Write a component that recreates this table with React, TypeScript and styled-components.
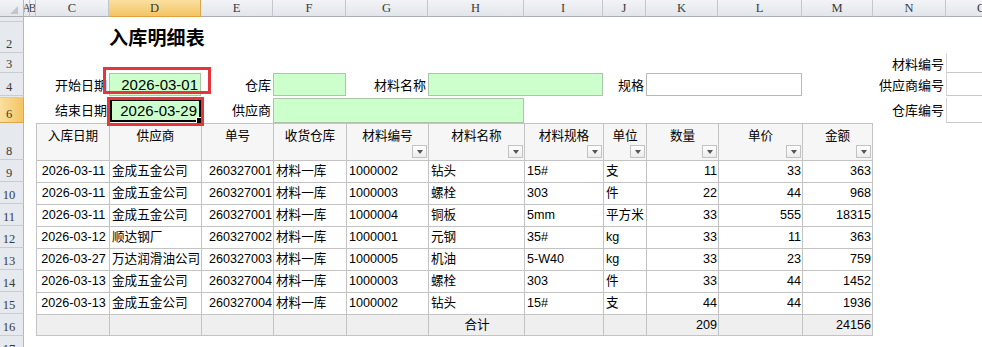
import React from "react";
import styled, { createGlobalStyle, css } from "styled-components";

const COLS = [24, 6, 6, 73, 92, 72, 73, 82, 96, 79, 43, 72, 84, 71, 73, 72];
const TEMPLATE = COLS.map((w) => `${w}px`).join(" ");
const LETTERS = ["A", "B", "C", "D", "E", "F", "G", "H", "I", "J", "K", "L", "M", "N", "O"];

const BORDER = "#c3c3c3";

const GlobalStyle = createGlobalStyle`
  html, body { margin: 0; padding: 0; background: #fff; overflow: hidden; }
  body { font-family: "Liberation Sans", "Noto Sans CJK SC", sans-serif; color: #000; }
`;

const Sheet = styled.div`
  position: relative;
  width: 982px;
  height: 347px;
  overflow: hidden;
  display: flex;
  flex-direction: column;
`;

const Row = styled.div<{ $h: number }>`
  display: grid;
  grid-template-columns: ${TEMPLATE};
  height: ${(p) => p.$h}px;
  width: max-content;
  flex: none;
`;

const Corner = styled.div`
  grid-column: 1;
  box-sizing: border-box;
  background: linear-gradient(#f2f4f7, #e2e5ea);
  border-right: 1px solid #b3b8bf;
  border-bottom: 1px solid #a9aeb5;
  display: flex;
  align-items: flex-end;
  justify-content: flex-end;
  padding: 0 5px 2px 0;
  &::after {
    content: "";
    width: 0;
    height: 0;
    border-left: 8px solid transparent;
    border-bottom: 8px solid #c2c6cc;
  }
`;

const ColHead = styled.div<{ $active?: boolean }>`
  box-sizing: border-box;
  background: ${(p) => (p.$active ? "linear-gradient(#fadf9f, #f3c564)" : "linear-gradient(#f2f4f7, #e2e5ea)")};
  border-right: 1px solid ${(p) => (p.$active ? "#dca64a" : "#c3c7cd")};
  border-bottom: 1px solid ${(p) => (p.$active ? "#e2a13a" : "#a9aeb5")};
  font: 12.5px "Liberation Serif", "DejaVu Serif", serif;
  color: #3a3a3a;
  display: flex;
  align-items: center;
  justify-content: center;
  overflow: hidden;
  white-space: nowrap;
`;

const RowHead = styled.div<{ $active?: boolean }>`
  grid-column: 1;
  box-sizing: border-box;
  background: ${(p) => (p.$active ? "linear-gradient(90deg, #fadf9f, #f3c564)" : "#e6e9ed")};
  border-right: 1px solid ${(p) => (p.$active ? "#dca64a" : "#b3b8bf")};
  border-bottom: 1px solid ${(p) => (p.$active ? "#dca64a" : "#c9cdd2")};
  font: 12.5px "Liberation Serif", "DejaVu Serif", serif;
  color: #3a3a3a;
  display: flex;
  align-items: flex-end;
  justify-content: center;
  padding: 0 5px 1px 0;
  overflow: hidden;
  line-height: 14px;
`;

const Title = styled.div<{ $col: number }>`
  grid-column: ${(p) => p.$col} / span 3;
  font: bold 19px "Noto Sans CJK SC", sans-serif;
  display: flex;
  align-items: flex-end;
  padding-bottom: 3px;
  white-space: nowrap;
  letter-spacing: 0.2px;
`;

const Label = styled.div<{ $col: number; $nudge?: number }>`
  grid-column: ${(p) => p.$col};
  font: 13px "Noto Sans CJK SC", sans-serif;
  display: flex;
  align-items: center;
  justify-content: flex-end;
  padding: 0 2px ${(p) => p.$nudge ?? 0}px 0;
  white-space: nowrap;
`;

const Field = styled.div<{ $col: number; $span?: number; $green?: boolean; $selected?: boolean }>`
  grid-column: ${(p) => p.$col} / span ${(p) => p.$span ?? 1};
  position: relative;
  box-sizing: border-box;
  background: ${(p) => (p.$green ? "#ccffcc" : "#fff")};
  border: 1px solid ${(p) => (p.$green ? "#a9c6a9" : "#b9b9b9")};
  font: 15px "Liberation Sans", sans-serif;
  display: flex;
  align-items: center;
  justify-content: flex-end;
  padding-right: 2px;
  ${(p) =>
    p.$selected &&
    css`
      margin: 1px 0 1px 1px;
      border: 2px solid #000;
      &::after {
        content: "";
        position: absolute;
        right: -4px;
        bottom: -4px;
        width: 5px;
        height: 5px;
        background: #000;
        border: 1px solid #fff;
      }
    `}
`;

const SideBox = styled.div<{ $col: number }>`
  grid-column: ${(p) => p.$col};
  box-sizing: border-box;
  border-left: 1px solid #d4d4d4;
  border-bottom: 1px solid #c8c8c8;
`;

type Align = "left" | "center" | "right";
type Kind = "head" | "data" | "total";

const TCell = styled.div<{ $col: number; $span?: number; $align?: Align; $kind?: Kind; $last?: boolean; $bottom?: boolean }>`
  grid-column: ${(p) => p.$col} / span ${(p) => p.$span ?? 1};
  position: relative;
  box-sizing: border-box;
  border-left: 1px solid ${BORDER};
  border-top: 1px solid ${BORDER};
  ${(p) => p.$last && css`border-right: 1px solid ${BORDER};`}
  ${(p) => p.$bottom && css`border-bottom: 1px solid ${BORDER};`}
  background: ${(p) => (p.$kind === "head" ? "#f6f6f6" : p.$kind === "total" ? "#efefef" : "#fff")};
  display: flex;
  align-items: ${(p) => (p.$kind === "head" ? "flex-start" : "center")};
  justify-content: ${(p) => (p.$align === "left" ? "flex-start" : p.$align === "right" ? "flex-end" : "center")};
  padding: ${(p) => (p.$kind === "head" ? "4px 1px 0" : "0 1px 0 2px")};
  font-size: 12.6px;
  line-height: 17px;
  white-space: nowrap;
  overflow: hidden;
`;

const FilterBtn = styled.span`
  position: absolute;
  right: 1px;
  bottom: 2px;
  width: 15px;
  height: 13px;
  box-sizing: border-box;
  border: 1px solid #c2c2c2;
  background: linear-gradient(#ffffff, #ececec);
  display: flex;
  align-items: center;
  justify-content: center;
  &::after {
    content: "";
    width: 0;
    height: 0;
    border-left: 3.5px solid transparent;
    border-right: 3.5px solid transparent;
    border-top: 4px solid #555;
  }
`;

const Annotation = styled.div`
  position: absolute;
  box-sizing: border-box;
  border: 3px solid #e5353d;
  pointer-events: none;
`;

const HEADERS: { text: string; filter: boolean }[] = [
  { text: "入库日期", filter: false },
  { text: "供应商", filter: false },
  { text: "单号", filter: false },
  { text: "收货仓库", filter: false },
  { text: "材料编号", filter: true },
  { text: "材料名称", filter: true },
  { text: "材料规格", filter: true },
  { text: "单位", filter: true },
  { text: "数量", filter: true },
  { text: "单价", filter: true },
  { text: "金额", filter: true },
];

const ALIGNS: Align[] = ["center", "left", "right", "left", "left", "left", "left", "left", "right", "right", "right"];

const DATA: string[][] = [
  ["2026-03-11", "金成五金公司", "260327001", "材料一库", "1000002", "钻头", "15#", "支", "11", "33", "363"],
  ["2026-03-11", "金成五金公司", "260327001", "材料一库", "1000003", "螺栓", "303", "件", "22", "44", "968"],
  ["2026-03-11", "金成五金公司", "260327001", "材料一库", "1000004", "铜板", "5mm", "平方米", "33", "555", "18315"],
  ["2026-03-12", "顺达钢厂", "260327002", "材料一库", "1000001", "元钢", "35#", "kg", "33", "11", "363"],
  ["2026-03-27", "万达润滑油公司", "260327003", "材料一库", "1000005", "机油", "5-W40", "kg", "33", "23", "759"],
  ["2026-03-13", "金成五金公司", "260327004", "材料一库", "1000003", "螺栓", "303", "件", "33", "44", "1452"],
  ["2026-03-13", "金成五金公司", "260327004", "材料一库", "1000002", "钻头", "15#", "支", "44", "44", "1936"],
];

const TOTAL = ["", "", "", "", "", "合计", "", "", "209", "", "24156"];
const TOTAL_ALIGN: Align[] = ["center", "center", "center", "center", "center", "center", "center", "center", "right", "right", "right"];

const FIRST = 4; // column C in grid

export default function App() {
  return (
    <>
      <GlobalStyle />
      <Sheet>
        <Row $h={17}>
          <Corner />
          {LETTERS.map((l) => (
            <ColHead key={l} $active={l === "D"}>
              {l}
            </ColHead>
          ))}
        </Row>

        <Row $h={5}>
          <RowHead>1</RowHead>
        </Row>

        <Row $h={31}>
          <RowHead>2</RowHead>
          <Title $col={5}>入库明细表</Title>
        </Row>

        <Row $h={20}>
          <RowHead>3</RowHead>
          <Label $col={15}>材料编号</Label>
          <SideBox $col={16} />
        </Row>

        <Row $h={23}>
          <RowHead>4</RowHead>
          <Label $col={4}>开始日期</Label>
          <Field $col={5} $green>2026-03-01</Field>
          <Label $col={6}>仓库</Label>
          <Field $col={7} $green />
          <Label $col={8}>材料名称</Label>
          <Field $col={9} $span={2} $green />
          <Label $col={11}>规格</Label>
          <Field $col={12} $span={2} />
          <Label $col={15}>供应商编号</Label>
          <SideBox $col={16} />
        </Row>

        <Row $h={2}>
          <RowHead />
        </Row>

        <Row $h={25}>
          <RowHead $active>6</RowHead>
          <Label $col={4} $nudge={3}>结束日期</Label>
          <Field $col={5} $green $selected>2026-03-29</Field>
          <Label $col={6} $nudge={3}>供应商</Label>
          <Field $col={7} $span={3} $green />
          <Label $col={15} $nudge={2}>仓库编号</Label>
          <SideBox $col={16} />
        </Row>

        <Row $h={37}>
          <RowHead>8</RowHead>
          {HEADERS.map((h, i) => (
            <TCell key={h.text} $col={FIRST + i} $kind="head" $last={i === HEADERS.length - 1}>
              {h.text}
              {h.filter && <FilterBtn />}
            </TCell>
          ))}
        </Row>

        {DATA.map((row, r) => (
          <Row $h={22} key={r}>
            <RowHead>{9 + r}</RowHead>
            {row.map((v, i) => (
              <TCell key={i} $col={FIRST + i} $align={ALIGNS[i]} $last={i === row.length - 1}>
                {v}
              </TCell>
            ))}
          </Row>
        ))}

        <Row $h={22}>
          <RowHead>16</RowHead>
          {TOTAL.map((v, i) => (
            <TCell key={i} $col={FIRST + i} $kind="total" $align={TOTAL_ALIGN[i]} $last={i === TOTAL.length - 1} $bottom>
              {v}
            </TCell>
          ))}
        </Row>

        <Row $h={22}>
          <RowHead>17</RowHead>
        </Row>

        <Annotation style={{ left: 103, top: 67, width: 108, height: 27 }} />
        <Annotation style={{ left: 107, top: 97, width: 97, height: 29 }} />
      </Sheet>
    </>
  );
}
